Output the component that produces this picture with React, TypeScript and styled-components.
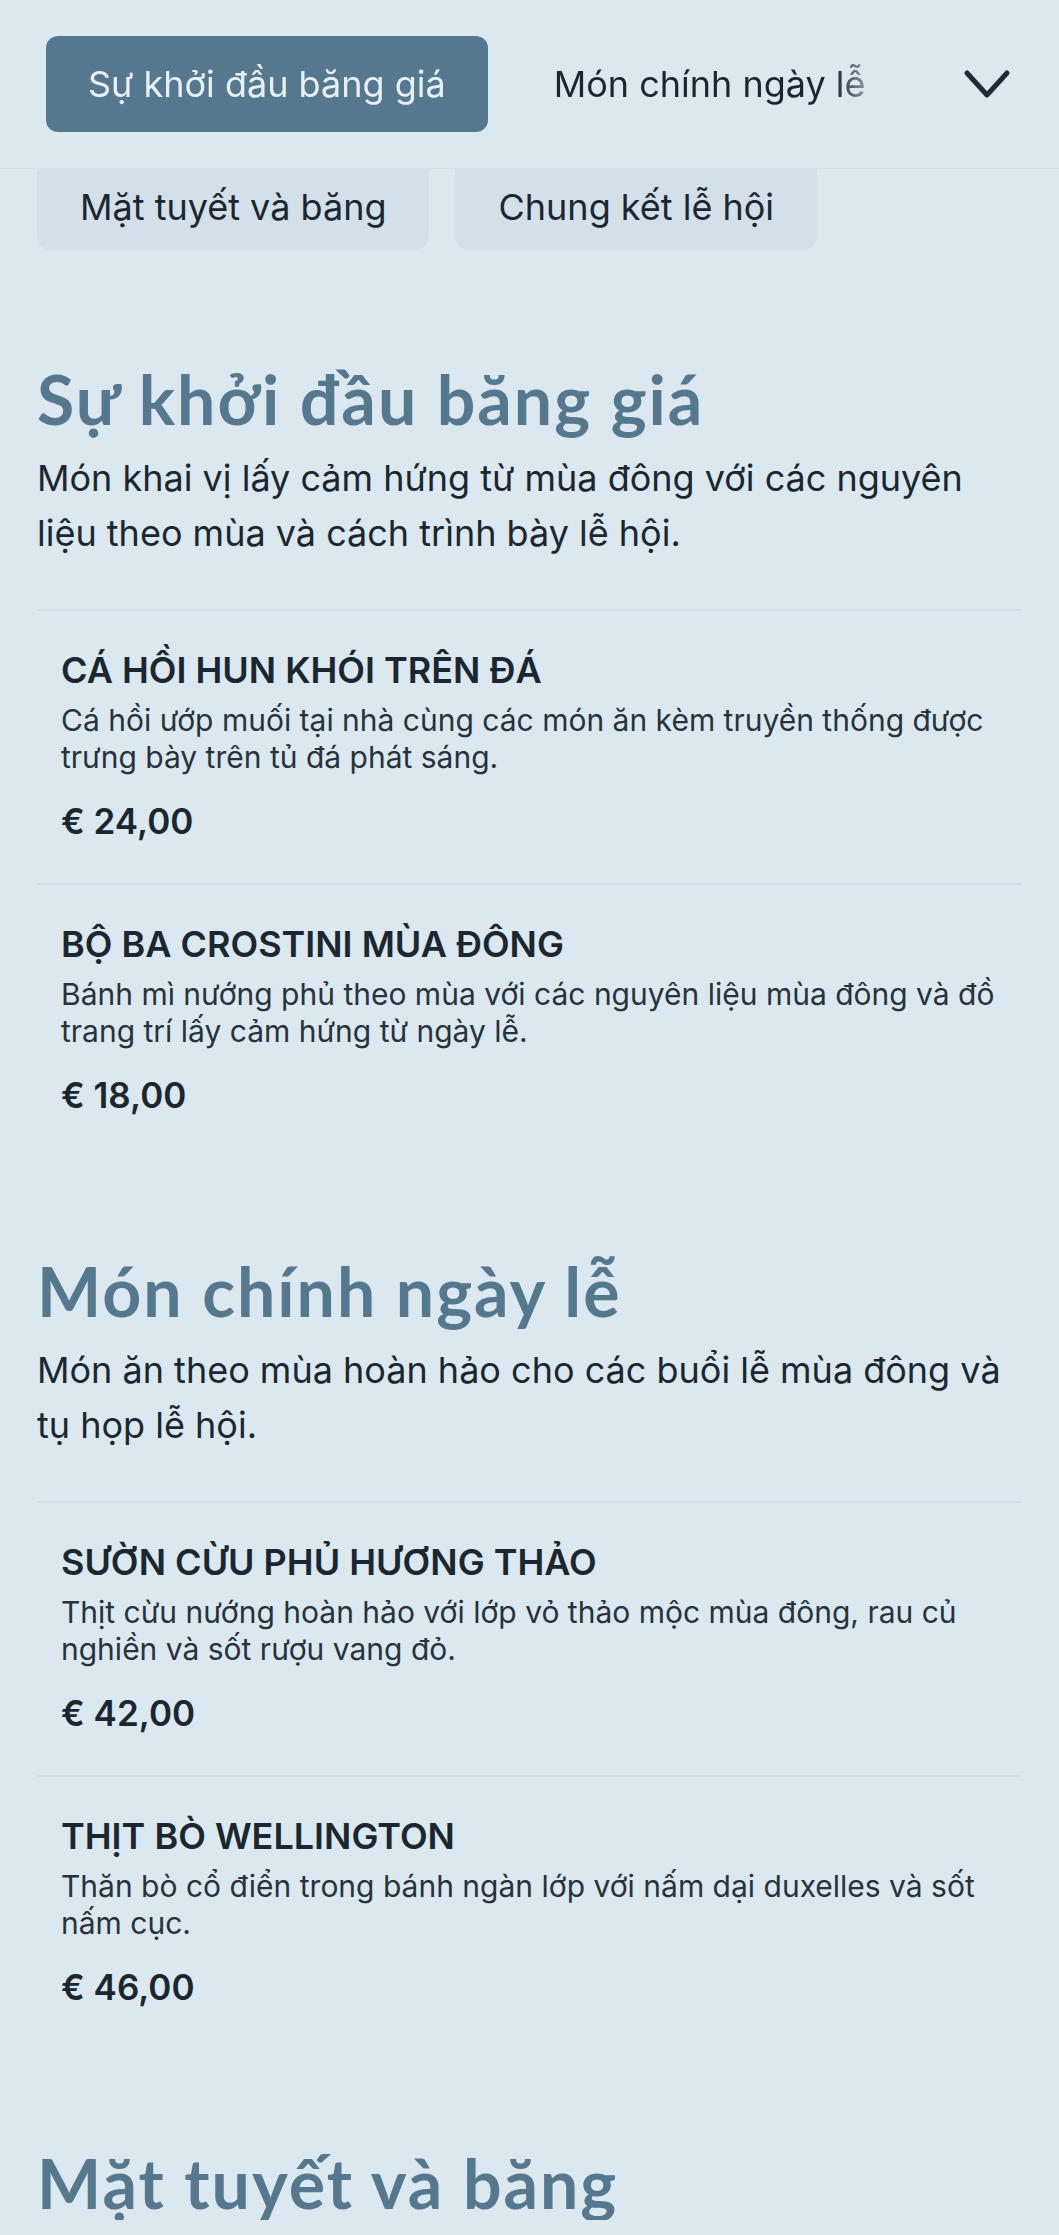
import React, { useState } from 'react'
import styled, { createGlobalStyle } from 'styled-components'

type Dish = {
  name: string
  description: string
  price: string
}

type Course = {
  id: string
  title: string
  intro: string
  dishes: Dish[]
}

const courses: Course[] = [
  {
    id: 'start',
    title: 'Sự khởi đầu băng giá',
    intro: 'Món khai vị lấy cảm hứng từ mùa đông với các nguyên liệu theo mùa và cách trình bày lễ hội.',
    dishes: [
      {
        name: 'CÁ HỒI HUN KHÓI TRÊN ĐÁ',
        description: 'Cá hồi ướp muối tại nhà cùng các món ăn kèm truyền thống được trưng bày trên tủ đá phát sáng.',
        price: '€ 24,00',
      },
      {
        name: 'BỘ BA CROSTINI MÙA ĐÔNG',
        description: 'Bánh mì nướng phủ theo mùa với các nguyên liệu mùa đông và đồ trang trí lấy cảm hứng từ ngày lễ.',
        price: '€ 18,00',
      },
    ],
  },
  {
    id: 'mains',
    title: 'Món chính ngày lễ',
    intro: 'Món ăn theo mùa hoàn hảo cho các buổi lễ mùa đông và tụ họp lễ hội.',
    dishes: [
      {
        name: 'SƯỜN CỪU PHỦ HƯƠNG THẢO',
        description: 'Thịt cừu nướng hoàn hảo với lớp vỏ thảo mộc mùa đông, rau củ nghiền và sốt rượu vang đỏ.',
        price: '€ 42,00',
      },
      {
        name: 'THỊT BÒ WELLINGTON',
        description: 'Thăn bò cổ điển trong bánh ngàn lớp với nấm dại duxelles và sốt nấm cục.',
        price: '€ 46,00',
      },
    ],
  },
  {
    id: 'snow',
    title: 'Mặt tuyết và băng',
    intro: '',
    dishes: [],
  },
  {
    id: 'finale',
    title: 'Chung kết lễ hội',
    intro: '',
    dishes: [],
  },
]

const VISIBLE_TABS = 2

function App() {
  const [active, setActive] = useState('start')

  return (
    <>
      <GlobalStyle />
      <Header>
        <TabStrip>
          {courses.slice(0, VISIBLE_TABS).map((c) => (
            <Tab key={c.id} $active={c.id === active} onClick={() => setActive(c.id)}>
              {c.title}
            </Tab>
          ))}
        </TabStrip>
        <ChevronButton aria-label='Mở danh sách'>
          <svg width='48' height='32' viewBox='0 0 48 32' fill='none'>
            <polyline
              points='4,5 24,27 44,5'
              stroke='#1f2c35'
              strokeWidth='5'
              strokeLinecap='round'
              strokeLinejoin='round'
            />
          </svg>
        </ChevronButton>
      </Header>

      <OverflowRow>
        {courses.slice(VISIBLE_TABS).map((c) => (
          <OverflowTab key={c.id} onClick={() => setActive(c.id)}>
            {c.title}
          </OverflowTab>
        ))}
      </OverflowRow>

      <main>
        {courses.slice(0, 3).map((c) => (
          <Section key={c.id}>
            <Heading>{c.title}</Heading>
            {c.intro && <Intro>{c.intro}</Intro>}
            {c.dishes.length > 0 && (
              <DishList>
                {c.dishes.map((d) => (
                  <DishItem key={d.name}>
                    <DishName>{d.name}</DishName>
                    <DishDescription>{d.description}</DishDescription>
                    <Price>{d.price}</Price>
                  </DishItem>
                ))}
              </DishList>
            )}
          </Section>
        ))}
      </main>
    </>
  )
}

const GlobalStyle = createGlobalStyle`
  html, body {
    margin: 0;
    padding: 0;
    background: #dce8f0;
  }
  body {
    font-family: Inter, 'Noto Sans', sans-serif;
    color: #1b2730;
  }
  * {
    box-sizing: border-box;
  }
`

const Header = styled.header`
  display: flex;
  flex-direction: row;
  align-items: center;
  height: 169px;
  padding-left: 46px;
  border-bottom: 1px solid #d2dfe8;
  background: #dce8f0;
`

const TabStrip = styled.nav`
  flex: 1;
  display: flex;
  flex-direction: row;
  flex-wrap: nowrap;
  align-items: center;
  gap: 24px;
  overflow: hidden;
  -webkit-mask-image: linear-gradient(to right, #000 calc(100% - 92px), transparent calc(100% - 38px));
  mask-image: linear-gradient(to right, #000 calc(100% - 92px), transparent calc(100% - 38px));
`

const Tab = styled.button<{ $active?: boolean }>`
  flex-shrink: 0;
  height: 96px;
  padding: 0 42px;
  border: none;
  border-radius: 12px;
  font-family: Inter, 'Noto Sans', sans-serif;
  font-size: 36px;
  white-space: nowrap;
  cursor: pointer;
  background: ${({ $active }) => ($active ? '#56788e' : 'transparent')};
  color: ${({ $active }) => ($active ? '#e8f0f5' : '#1b2730')};
`

const ChevronButton = styled.button`
  flex-shrink: 0;
  display: flex;
  align-items: center;
  justify-content: center;
  width: 120px;
  height: 96px;
  margin-right: 12px;
  padding: 0;
  border: none;
  background: transparent;
  cursor: pointer;
`

const OverflowRow = styled.div`
  display: flex;
  flex-direction: row;
  gap: 26px;
  padding: 0 37px;
  margin-bottom: 15px;
`

const OverflowTab = styled.button`
  height: 81px;
  padding: 0 43px 6px;
  border: none;
  border-radius: 0 0 14px 14px;
  background: #d3e0ea;
  color: #1b2730;
  font-family: Inter, 'Noto Sans', sans-serif;
  font-size: 36px;
  white-space: nowrap;
  cursor: pointer;
`

const Section = styled.section`
  padding: 97px 37px 0;
`

const Heading = styled.h2`
  margin: 0;
  font-family: Lato, 'Open Sans', sans-serif;
  font-weight: 700;
  font-size: 68px;
  line-height: 74px;
  letter-spacing: 2px;
  color: #56788e;
`

const Intro = styled.p`
  margin: 15px 0 0;
  font-size: 36px;
  line-height: 55px;
  color: #1b2730;
`

const DishList = styled.ul`
  list-style: none;
  margin: 48px 0 0;
  padding: 0;
`

const DishItem = styled.li`
  padding: 38px 24px 40px;
  border-top: 2px solid #d1dee7;
`

const DishName = styled.h3`
  margin: 0;
  font-size: 36px;
  line-height: 43px;
  font-weight: 600;
  color: #1b2730;
`

const DishDescription = styled.p`
  margin: 10px 0 0;
  font-size: 30px;
  line-height: 37px;
  color: #26333c;
`

const Price = styled.div`
  margin-top: 24px;
  font-size: 35px;
  line-height: 43px;
  font-weight: 600;
  color: #1b2730;
`

export default App
